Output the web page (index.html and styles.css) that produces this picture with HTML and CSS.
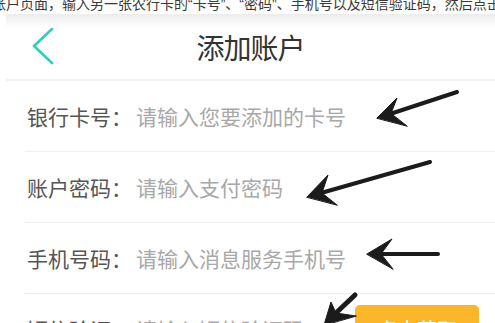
FILE: index.html
```html
<!DOCTYPE html>
<html lang="zh-CN">
<head>
    <meta charset="UTF-8">
    <meta name="viewport" content="width=device-width, initial-scale=1.0">
    <title>添加账户</title>
    <link rel="stylesheet" href="styles.css">
</head>
<body>
    <p class="caption">账户页面，输入另一张农行卡的“卡号”、“密码”、手机号以及短信验证码，然后点击“下一步”</p>

    <div class="phone">
        <div class="nav-bar">
            <svg class="back" width="24" height="40" viewBox="0 0 24 40">
                <polyline points="20,1 2,18 20,35" fill="none" stroke="#2fcfb6" stroke-width="2.6" stroke-linecap="round" stroke-linejoin="round"/>
            </svg>
            <h1 class="title">添加账户</h1>
        </div>

        <div class="form">
            <div class="row">
                <span class="label">银行卡号：</span>
                <span class="hint">请输入您要添加的卡号</span>
            </div>
            <div class="row">
                <span class="label">账户密码：</span>
                <span class="hint">请输入支付密码</span>
            </div>
            <div class="row">
                <span class="label">手机号码：</span>
                <span class="hint">请输入消息服务手机号</span>
            </div>
            <div class="row">
                <span class="label">短信验证：</span>
                <span class="hint">请输入短信验证码</span>
                <button class="code-btn">点击获取</button>
            </div>
        </div>
    </div>

    <!-- hand-drawn annotation arrows laid over the screenshot -->
    <svg class="marks" width="495" height="323" viewBox="0 0 495 323">
        <g stroke="#1b1b1b" stroke-width="4" stroke-linecap="round" fill="#1b1b1b">
            <line x1="457" y1="92" x2="390" y2="114"/>
            <polygon points="377,118 397,98 391,113.5 407,126" stroke-width="1" stroke-linejoin="round"/>

            <line x1="430" y1="162" x2="321" y2="193"/>
            <polygon points="307,197 328,175 322,193 337,205" stroke-width="1" stroke-linejoin="round"/>

            <line x1="438" y1="254" x2="380" y2="254"/>
            <polygon points="367,254 392,239 381,254 393,269" stroke-width="1" stroke-linejoin="round"/>

            <line x1="355" y1="295" x2="337" y2="312" stroke-width="5"/>
            <polygon points="324,325 331,302 336,313 356,316" stroke-width="1" stroke-linejoin="round"/>
        </g>
    </svg>
</body>
</html>
```

FILE: styles.css
```css
body {
    margin: 0;
    width: 495px;
    height: 323px;
    overflow: hidden;
    position: relative;
    background: #fff;
    font-family: "Noto Sans CJK SC", "Noto Sans", sans-serif;
}

/* cut-off article text above the screenshot */
.caption {
    margin: -3px 0 0 -8px;
    height: 14px;
    line-height: 15px;
    font-size: 14px;
    font-family: "Liberation Sans", "Noto Sans CJK SC", sans-serif;
    color: #3a3a3a;
    white-space: nowrap;
    overflow: hidden;
}

.phone {
    margin: 3px 0 0 6px;
    background: #fff;
}

.nav-bar {
    height: 65px;
    display: flex;
    align-items: center;
    justify-content: center;
    position: relative;
    background: linear-gradient(#ececec, #fff 14px);
    border-bottom: 2px solid #f3f3f3;
}

.back {
    position: absolute;
    left: 26px;
    top: 14px;
}

.title {
    margin: 0;
    font-size: 28px;
    font-weight: normal;
    color: #333;
    letter-spacing: -1px;
}

.form {
    padding-left: 19px;
}

.row {
    height: 70px;
    display: flex;
    align-items: center;
    padding-left: 2px;
    border-bottom: 1px solid #efefef;
    font-size: 21px;
}

.label {
    color: #555;
    margin-right: 4px;
}

.hint {
    color: #a8a8a8;
}

.code-btn {
    margin-left: auto;
    margin-right: 16px;
    width: 124px;
    height: 48px;
    border: none;
    border-radius: 5px;
    background: #fbb62a;
    color: #fff;
    font-family: inherit;
    font-size: 20px;
}

.marks {
    position: absolute;
    left: 0;
    top: 0;
}
```
